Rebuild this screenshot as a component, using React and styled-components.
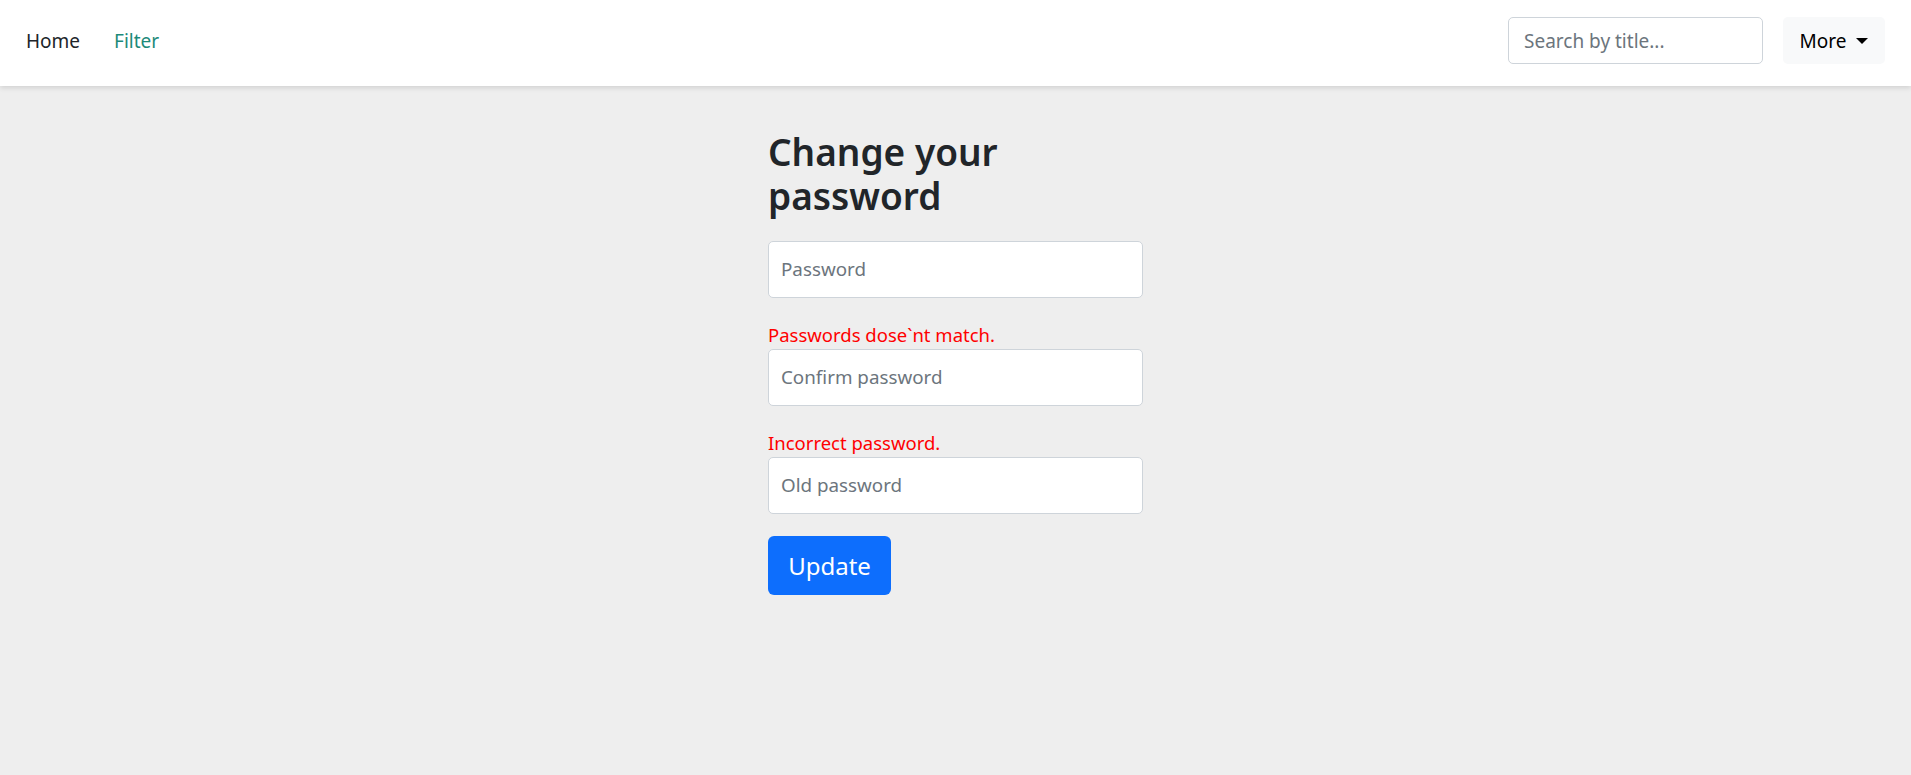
import React from "react";
import styled, { createGlobalStyle } from "styled-components";

const GlobalStyle = createGlobalStyle`
  * {
    box-sizing: border-box;
  }

  body {
    margin: 0;
    background-color: #eeeeee;
    font-family: "Noto Sans", "Open Sans", sans-serif;
    color: #212529;
  }
`;

export default function App() {
  return (
    <>
      <GlobalStyle />
      <NavBar>
        <NavLinks>
          <NavLink href="#">Home</NavLink>
          <NavLink href="#" $active>
            Filter
          </NavLink>
        </NavLinks>
        <NavRight>
          <SearchInput type="text" placeholder="Search by title..." />
          <MoreButton type="button">
            More
            <Caret />
          </MoreButton>
        </NavRight>
      </NavBar>
      <Main>
        <Form onSubmit={(e) => e.preventDefault()}>
          <Heading>Change your password</Heading>
          <Field>
            <TextInput type="password" placeholder="Password" />
          </Field>
          <Field>
            <ErrorText>Passwords dose`nt match.</ErrorText>
            <TextInput type="password" placeholder="Confirm password" />
          </Field>
          <Field>
            <ErrorText>Incorrect password.</ErrorText>
            <TextInput type="password" placeholder="Old password" />
          </Field>
          <SubmitButton type="submit">Update</SubmitButton>
        </Form>
      </Main>
    </>
  );
}

const NavBar = styled.nav`
  height: 86px;
  display: flex;
  align-items: center;
  justify-content: space-between;
  padding: 0 26px 5px;
  background-color: #ffffff;
  box-shadow: 0 2px 5px rgba(0, 0, 0, 0.12);
`;

const NavLinks = styled.div`
  display: flex;
  align-items: center;
  gap: 34px;
`;

const NavLink = styled.a`
  font-size: 19px;
  text-decoration: none;
  color: ${(p) => (p.$active ? "#1d8a7a" : "#212529")};
`;

const NavRight = styled.div`
  display: flex;
  align-items: center;
  gap: 20px;
`;

const SearchInput = styled.input`
  width: 255px;
  height: 47px;
  padding: 0 15px;
  font-family: inherit;
  font-size: 19px;
  color: #212529;
  background: #ffffff;
  border: 1px solid #ced4da;
  border-radius: 5px;

  &::placeholder {
    color: #6c757d;
  }
`;

const MoreButton = styled.button`
  width: 102px;
  height: 47px;
  display: flex;
  align-items: center;
  justify-content: center;
  gap: 10px;
  font-family: inherit;
  font-size: 19px;
  color: #000000;
  background-color: #f8f9fa;
  border: none;
  border-radius: 5px;
`;

const Caret = styled.span`
  width: 0;
  height: 0;
  border-left: 6px solid transparent;
  border-right: 6px solid transparent;
  border-top: 6px solid #000000;
`;

const Main = styled.main`
  display: flex;
  justify-content: center;
  padding-top: 44px;
`;

const Form = styled.form`
  width: 375px;
  display: flex;
  flex-direction: column;
`;

const Heading = styled.h2`
  margin: 0 0 22px;
  width: 300px;
  font-size: 37px;
  font-weight: 600;
  line-height: 1.2;
`;

const Field = styled.div`
  display: flex;
  flex-direction: column;
  margin-bottom: 22px;
`;

const ErrorText = styled.span`
  font-size: 18.5px;
  line-height: 29px;
  color: #ff0000;
`;

const TextInput = styled.input`
  width: 100%;
  height: 57px;
  padding: 0 12px;
  font-family: inherit;
  font-size: 18.8px;
  color: #212529;
  background: #ffffff;
  border: 1px solid #ced4da;
  border-radius: 5px;

  &::placeholder {
    color: #6c757d;
  }
`;

const SubmitButton = styled.button`
  align-self: flex-start;
  width: 123px;
  height: 59px;
  font-family: inherit;
  font-size: 24px;
  color: #ffffff;
  background-color: #0d6efd;
  border: none;
  border-radius: 6px;
`;
